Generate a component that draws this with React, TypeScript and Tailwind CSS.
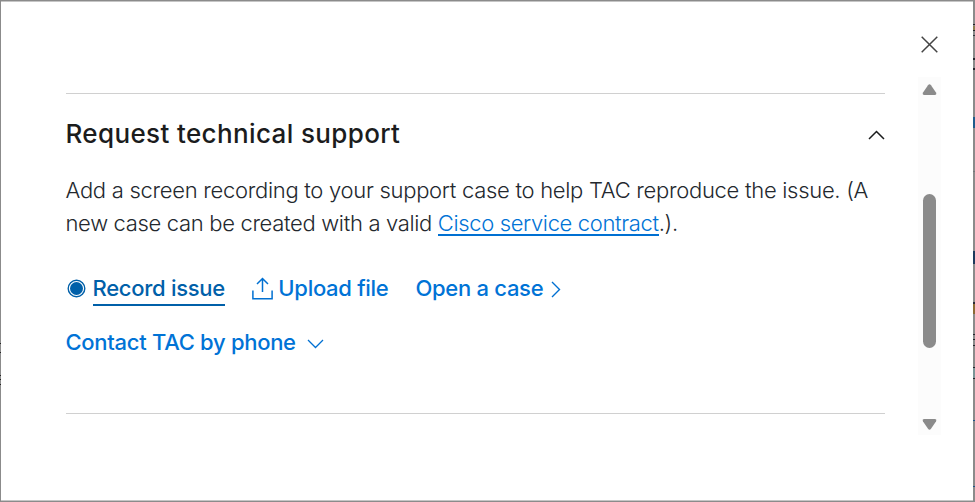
import type { ReactNode } from "react"
import clsx from "clsx"

// slivers of the dimmed page that stay visible beside the dialog
const rightMarks = [
  "top-[24px] h-px bg-[#26242a]",
  "top-[26px] h-[4px] bg-[#8d7d50]",
  "top-[30px] h-px bg-[#26242a]",
  "top-[35px] h-px bg-[#33363f]",
  "top-[58px] h-[2px] bg-[#26262e]",
  "top-[68px] h-[2px] bg-[#26262e]",
  "top-[117px] h-[11px] bg-[#1f5c8c]",
  "top-[171px] h-px bg-[#73767a]",
  "top-[251px] h-[13px] bg-[#1d3a5c]",
  "top-[302px] h-[2px] bg-[#2b2b38]",
  "top-[304px] h-[10px] bg-[#8c6a35]",
  "top-[334px] h-px bg-[#26262e]",
  "top-[339px] h-px bg-[#26262e]",
  "top-[345px] h-px bg-[#26262e]",
  "top-[367px] h-px bg-[#26262e]",
  "top-[368px] h-[10px] bg-[#7b9597]",
  "top-[378px] h-px bg-[#26262e]",
  "top-[420px] h-px bg-[#1d5288]",
  "top-[486px] h-px bg-[#1d5288]",
]

const leftMarks = [
  "top-[343px] h-px",
  "top-[352px] h-px",
  "top-[375px] h-px",
  "top-[379px] h-px",
  "top-[384px] h-px",
]

function ActionLink({ children, active }: { children: ReactNode; active?: boolean }) {
  return (
    <a
      href="#"
      className={clsx(
        "h-[35px] border-b-2 text-[22px] leading-[34px] font-medium tracking-[-0.29px] whitespace-nowrap",
        active ? "border-[#0060a9] text-[#0060a9]" : "border-transparent text-[#0073d6]"
      )}
    >
      {children}
    </a>
  )
}

function Scrollbar() {
  return (
    <div className="flex h-[358px] w-[23px] flex-col items-center bg-[#fcfcfc] pt-[6px] pb-[4px]">
      <svg width="15" height="13" viewBox="0 0 15 13" fill="#8b8b8b">
        <path d="M6 2.2Q7.5.2 9 2.2L14 9.6Q15 12 12.8 12H2.2Q0 12 1 9.6Z" />
      </svg>
      <div className="mt-[98px] h-[154px] w-[13px] rounded-full bg-[#8b8b8b]" />
      <svg className="mt-auto" width="15" height="13" viewBox="0 0 15 13" fill="#8b8b8b">
        <path d="M6 10.8Q7.5 12.8 9 10.8L14 3.4Q15 1 12.8 1H2.2Q0 1 1 3.4Z" />
      </svg>
    </div>
  )
}

export default function App() {
  return (
    <div className="relative flex h-[502px] w-[975px] overflow-hidden bg-[#8b8b8b] py-px pr-[2px] pl-px font-['Inter',sans-serif]">
      {rightMarks.map((m) => (
        <span key={m} className={clsx("absolute right-0 w-[2px]", m)} />
      ))}
      {leftMarks.map((m) => (
        <span key={m} className={clsx("absolute left-0 w-px bg-[#222]", m)} />
      ))}

      <div className="flex h-[500px] w-[972px] border-y border-[#c5c5c5] bg-white">
        <main className="ml-[65px] w-[819px] pt-[91px]">
          <section className="h-[321px] border-y border-[#d0d0d0]">
            <div className="flex items-center justify-between pt-[20px]">
              <h2 className="-ml-[0.5px] h-[40px] text-[26px] leading-[40px] font-medium tracking-[0.37px] text-[#1b1c1d]">
                Request technical support
              </h2>
              <svg className="mt-[2px]" width="17" height="10" viewBox="0 0 17 10" fill="none" stroke="#1b1c1d" strokeWidth="1.5">
                <path d="M1 9 8.5 1.5 16 9" />
              </svg>
            </div>

            <p className="mt-[20px] -ml-[0.5px] text-[22px] leading-[33px] font-light tracking-[-0.29px] whitespace-nowrap text-[#23282e]">
              Add a screen recording to your support case to help TAC reproduce the issue. (A
              <br />
              <span className="tracking-[-0.33px]">new case can be created with a valid </span>
              <a href="#" className="inline-block h-[26px] border-b-2 border-[#0070d2] leading-[27px] tracking-[-0.36px] text-[#0073d6]">
                Cisco service contract
              </a>
              .).
            </p>

            <div className="mt-[31px] flex">
              <svg className="mt-[8px] mr-[6.5px] ml-px" width="19" height="19" viewBox="0 0 19 19">
                <circle cx="9.5" cy="9.5" r="8.3" fill="none" stroke="#0060a9" strokeWidth="1.4" />
                <circle cx="9.5" cy="9.5" r="6.5" fill="#0060a9" />
              </svg>
              <ActionLink active>Record issue</ActionLink>
              <svg
                className="mt-[6px] mr-[5px] ml-[27.5px]"
                width="21"
                height="23"
                viewBox="0 0 21 23"
                fill="none"
                stroke="#0070d2"
                strokeWidth="1.5"
              >
                <path d="M.9 13.5V21.7H20.1V13.5M10.5 15V1.5M5 7 10.5 1.5 16 7" />
              </svg>
              <ActionLink>Upload file</ActionLink>
              <span className="w-[27px]" />
              <ActionLink>Open a case</ActionLink>
              <svg className="mt-[10px] ml-[8px]" width="10" height="17" viewBox="0 0 10 17" fill="none" stroke="#0070d2" strokeWidth="1.4">
                <path d="M1 1 8.5 8.5 1 16" />
              </svg>
            </div>

            <div className="mt-[19px] -ml-[0.5px] flex">
              <ActionLink>Contact TAC by phone</ActionLink>
              <svg className="mt-[14px] ml-[11px]" width="17" height="10" viewBox="0 0 17 10" fill="none" stroke="#0070d2" strokeWidth="1.3">
                <path d="M1 1 8.5 8.5 16 1" />
              </svg>
            </div>
          </section>
        </main>

        <aside className="ml-[33px] flex w-[23px] flex-col items-center pt-[34px]">
          <button type="button" aria-label="Close" className="mb-[24px] h-[17px] w-[17px]">
            <svg width="17" height="17" viewBox="0 0 17 17" fill="none" stroke="#444" strokeWidth="1.5">
              <path d="M.7.7 16.3 16.3M16.3.7.7 16.3" />
            </svg>
          </button>
          <Scrollbar />
        </aside>
      </div>
    </div>
  )
}
